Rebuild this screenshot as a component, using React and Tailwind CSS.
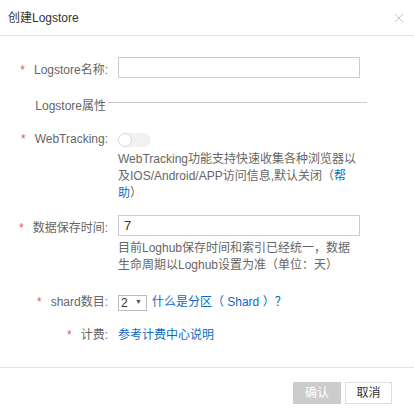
import { useState } from "react";

const font = { fontFamily: '"Liberation Sans", "Noto Sans CJK SC", sans-serif' };

function Label({ children, className = "" }) {
  return (
    <div className={"w-[110px] shrink-0 text-right pr-[2px] text-[#666] " + className}>
      <span className="text-[#e9564f] mr-[9px]">*</span>
      {children}
    </div>
  );
}

export default function App() {
  const [name, setName] = useState("");
  const [days, setDays] = useState("7");
  const [shard, setShard] = useState("2");

  return (
    <div className="w-[414px] h-[415px] bg-white flex flex-col text-[12px]" style={font}>
      {/* header */}
      <div className="h-[36px] shrink-0 border-b border-[#e5e5e5] flex items-center justify-between pl-[8px] pr-[10px]">
        <span className="text-[#333] text-[12px]">创建Logstore</span>
        <svg width="10" height="10" viewBox="0 0 10 10" className="text-[#c4c4c4]">
          <path d="M1 1L9 9M9 1L1 9" stroke="currentColor" strokeWidth="1" />
        </svg>
      </div>

      {/* body */}
      <div className="flex-1 flex flex-col">
        <div className="flex mt-[21px]">
          <Label className="leading-[21px] pt-[3px]">Logstore名称:</Label>
          <input
            value={name}
            onChange={(e) => setName(e.target.value)}
            className="ml-[8px] w-[242px] h-[21px] border border-[#ccc] px-[6px] outline-none text-[#333]"
          />
        </div>

        <div className="flex mt-[17px] leading-[17px]">
          <div className="w-[108px] shrink-0 text-right pr-[2px] text-[#666]">Logstore属性</div>
          <div className="mt-[4px] w-[259px] h-px bg-[#ccc]" />
        </div>

        <div className="flex mt-[16px] leading-[17px]">
          <Label>WebTracking:</Label>
          <div className="ml-[8px] flex flex-col">
            <div className="mt-[2px] w-[33px] h-[14px] rounded-full bg-[#f1f1f1] flex items-center">
              <div className="w-[14px] h-[14px] rounded-full bg-white border border-[#d9d9d9]" />
            </div>
            <p className="mt-[4px] w-[244px] text-[#666]">
              WebTracking功能支持快速收集各种浏览器以及IOS/Android/APP访问信息,默认关闭（
              <a className="text-[#0b6bc4]">帮助</a>）
            </p>
          </div>
        </div>

        <div className="flex mt-[13px]">
          <Label className="leading-[21px] pt-[3px]">数据保存时间:</Label>
          <div className="ml-[8px] flex flex-col">
            <input
              value={days}
              onChange={(e) => setDays(e.target.value)}
              className="w-[242px] h-[21px] border border-[#ccc] px-[5px] outline-none text-[#333] text-[13px]"
            />
            <p className="mt-[4px] w-[244px] leading-[17px] text-[#666]">
              目前Loghub保存时间和索引已经统一，数据生命周期以Loghub设置为准（单位：天）
            </p>
          </div>
        </div>

        <div className="flex mt-[20px] items-center">
          <Label className="leading-[17px]">shard数目:</Label>
          <div className="ml-[8px] flex items-center">
            <select
              value={shard}
              onChange={(e) => setShard(e.target.value)}
              className="w-[29px] h-[16px] border border-[#bbb] text-[12px] leading-[14px] text-[#333] pl-[2px] appearance-none bg-white"
            >
              {["1", "2", "3", "4", "5"].map((n) => (
                <option key={n}>{n}</option>
              ))}
            </select>
            <span className="-ml-[12px] text-[7px] text-[#555] pointer-events-none">▼</span>
            <a className="ml-[10px] text-[#0b6bc4] leading-[17px]">什么是分区（ Shard ）？</a>
          </div>
        </div>

        <div className="flex mt-[16px] leading-[17px]">
          <Label>计费:</Label>
          <a className="ml-[8px] text-[#0b6bc4]">参考计费中心说明</a>
        </div>
      </div>

      {/* footer */}
      <div className="h-[48px] shrink-0 border-t border-[#e5e5e5] flex justify-end items-start pt-[14px] pr-[22px] gap-[4px]">
        <button className="w-[48px] h-[22px] bg-[#ccc] text-white">确认</button>
        <button className="w-[47px] h-[22px] bg-white border border-[#ddd] text-[#333]">取消</button>
      </div>
    </div>
  );
}
